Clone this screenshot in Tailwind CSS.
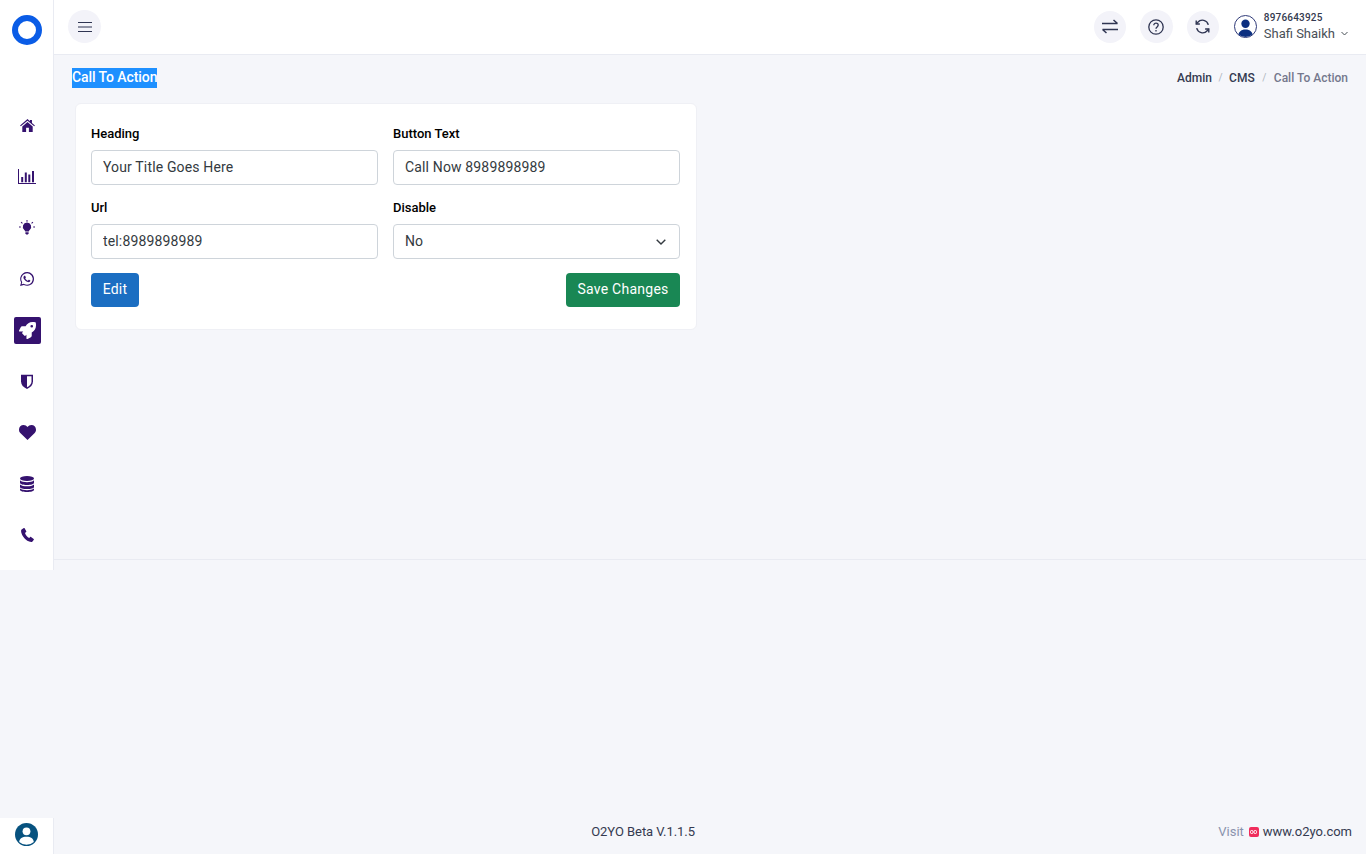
<!DOCTYPE html>
<html lang="en">
<head>
<meta charset="utf-8">
<title>Call To Action</title>
<script src="https://cdn.jsdelivr.net/npm/@tailwindcss/browser@4"></script>
</head>
<body class="bg-[#f5f6fa] font-['Roboto',sans-serif] overflow-hidden">
<div class="flex h-[854px] w-[1366px]">
  <aside class="w-[54px] shrink-0 flex flex-col">
    <div class="h-[570px] bg-white border-r border-[#e9ebf2] flex flex-col items-center">
      <div class="h-[59px] w-full flex items-center justify-center">
        <div class="w-[30px] h-[30px] rounded-full border-[6px] border-[#0a5ce6] bg-white"></div>
      </div>
      <nav class="mt-[52.5px] ml-[1px] flex flex-col items-center gap-[24.25px] text-[#35126f]">
        <a class="w-[27px] h-[27px] flex items-center justify-center">
          <svg class="w-[15px] h-[13px]" viewBox="0 0 16 14" fill="currentColor"><path d="M8 0 L10.6 2.3V1h2.2v3.2L16 7l-.8.9L8 1.8.8 7.9 0 7z"/><path d="M8 3.2l5.6 4.8V14H9.5V9.5h-3V14H2.4V8z"/></svg>
        </a>
        <a class="w-[27px] h-[27px] flex items-center justify-center">
          <svg class="w-[18px] h-[15px]" viewBox="0 0 18 15" fill="currentColor"><path d="M0 0h1v14h17v1H0z"/><path d="M3.2 8h2v5.2h-2zM6.8 3.5h2v9.7h-2zM10.3 5.5h2v7.7h-2zM14 2h2v11.2h-2z"/></svg>
        </a>
        <a class="w-[27px] h-[27px] flex items-center justify-center">
          <svg class="w-[16px] h-[16px]" viewBox="0 0 16 16" fill="currentColor"><path d="M8 2.600a4.200 4.200 0 0 0-2.700 7.400c.6.500.9 1 .9 1.600h3.600c0-.6.3-1.100.9-1.600A4.200 4.200 0 0 0 8 2.600z"/><path d="M6.400 12.300h3.200v1.300l-.8 1H7.200l-.8-1z"/><path d="M7.500 0h1v1.800h-1zM0 6.500h1.800v1H0zM14.200 6.500H16v1h-1.800zM2.400 1.800l1.400 1.300-.7.7L1.700 2.500zM13.600 1.800l.7.7-1.400 1.300-.7-.7z"/></svg>
        </a>
        <a class="w-[27px] h-[27px] flex items-center justify-center">
          <svg class="w-[14px] h-[14px]" viewBox="0 0 24 24" fill="currentColor"><path d="M20.5 3.5A11.8 11.8 0 0 0 1.9 17.7L.2 24l6.4-1.7A11.8 11.8 0 0 0 24 12c0-3.2-1.200-6.200-3.500-8.500zM12 21.800c-1.800 0-3.500-.5-5-1.400l-.4-.2-3.800 1 1-3.700-.2-.4A9.800 9.800 0 1 1 12 21.800z"/><path d="M17.400 14.400c-.3-.1-1.800-.9-2-1-.3-.1-.5-.1-.7.2l-.9 1.100c-.2.200-.3.200-.6.100-1.800-.9-3-1.600-4.100-3.600-.3-.5.300-.5.800-1.500.1-.2 0-.4 0-.5l-.9-2.200c-.2-.6-.5-.5-.7-.5h-.6c-.2 0-.5.100-.8.400-.3.300-1 1-1 2.400s1 2.800 1.200 3c.1.200 2 3.100 4.900 4.300 1.800.8 2.500.9 3.400.7.600-.1 1.800-.7 2-1.400.2-.7.2-1.300.2-1.400-.1-.1-.3-.2-.6-.3z"/></svg>
        </a>
        <a class="w-[27px] h-[27px] flex items-center justify-center bg-[#35126f] rounded-[2px] text-white">
          <svg class="w-[17px] h-[17px]" viewBox="0 0 512 512" fill="currentColor"><path d="M505.12 19.09c-1.189-5.532-6.666-11-12.207-12.188C460.71 0 435.48 0 410.36 0c-103.3 0-165.25 55.25-211.49 128H94.87A48 48 0 0 0 52 154.49l-49.42 98.8A24 24 0 0 0 24.07 288h103.77l-22.47 22.47a32 32 0 0 0 0 45.25l50.9 50.91a32 32 0 0 0 45.26 0L224 384.16V488a24 24 0 0 0 34.7 21.49l98.7-49.39a47.91 47.91 0 0 0 26.5-42.9V312.79c72.59-46.3 128-108.4 128-211.09.1-25.2.1-50.4-6.78-82.61zM384 168a40 40 0 1 1 40-40 40 40 0 0 1-40 40z"/></svg>
        </a>
        <a class="w-[27px] h-[27px] flex items-center justify-center">
          <svg class="w-[12px] h-[15px]" viewBox="0 0 12 15"><path d="M0 .8h12V7.500c0 3.300-2.400 5.900-6 7.500-3.600-1.600-6-4.200-6-7.500z" fill="currentColor"/><path d="M6 2.300h4.500V7.500c0 2.400-1.800 4.400-4.500 5.800z" fill="#fff"/></svg>
        </a>
        <a class="w-[27px] h-[27px] flex items-center justify-center">
          <svg class="w-[17px] h-[15px]" viewBox="0 0 17 15" fill="currentColor"><path d="M8.500 15 1.300 8A4.400 4.400 0 0 1 0 4.800C0 2 2 0 4.600 0c1.500 0 3 .8 3.900 2.100C9.400.8 10.900 0 12.400 0 15 0 17 2 17 4.800c0 1.200-.5 2.300-1.300 3.200z"/></svg>
        </a>
        <a class="w-[27px] h-[27px] flex items-center justify-center">
          <svg class="w-[14px] h-[16px]" viewBox="0 0 14 16" fill="currentColor"><ellipse cx="7" cy="2.500" rx="7" ry="2.500"/><path d="M0 4.300C1.300 5.700 4.200 6.200 7 6.200s5.700-.5 7-1.900V6.800C14 8.200 10.900 9 7 9S0 8.200 0 6.800z"/><path d="M0 8.600C1.300 10 4.200 10.300 7 10.300s5.700-.3 7-1.700v2.400c0 1.400-3.100 2.100-7 2.100s-7-.7-7-2.100z" /><path d="M0 12.600c1.300 1.300 4.200 1.700 7 1.700s5.700-.4 7-1.700V13.800C14 15.200 10.900 16 7 16s-7-.8-7-2.200z"/></svg>
        </a>
        <a class="w-[27px] h-[27px] flex items-center justify-center">
          <svg class="w-[13px] h-[14px]" viewBox="0 0 13 14" fill="currentColor"><path d="M2.800 0 .6 1.400C-.2 2 0 3.800.6 5.500c1.300 3.700 4.700 7.400 8.400 8.300 1.100.3 2 .1 2.500-.4l1.300-1.700c.2-.3.2-.6-.1-.8L10 8.900c-.3-.2-.6-.2-.8.100l-1 1.100C6.500 9.500 4.500 7 4 5l1.100-.9c.3-.2.300-.5.200-.8L3.600.3C3.400 0 3.100-.1 2.800 0z"/></svg>
        </a>
      </nav>
    </div>
    <div class="flex-1"></div>
    <div class="h-[36px] bg-white border-r border-[#e9ebf2] flex items-center justify-center pb-[4px]">
      <svg class="w-[23px] h-[23px]" viewBox="0 0 23 23"><circle cx="11.500" cy="11.500" r="11.500" fill="#07527f"/><circle cx="11.500" cy="8.300" r="3.900" fill="#fff"/><path d="M4.200 19c.3-3.500 3-5.300 7.300-5.300s7 1.800 7.300 5.300a11 11 0 0 1-14.600 0z" fill="#fff"/></svg>
    </div>
  </aside>

  <div class="flex-1 min-w-0 flex flex-col">
    <header class="h-[55px] bg-white border-b border-[#e9ebf2] flex items-center pl-[14px] pr-[18px] pb-[1px]">
      <button class="w-[33px] h-[33px] rounded-full bg-[#f3f3f9] flex items-center justify-center">
        <svg class="w-[14px] h-[12px]" viewBox="0 0 14 12" fill="none" stroke="#2f3552" stroke-width="1.200"><path d="M0 1.500h14M0 6h14M0 10.500h14"/></svg>
      </button>
      <div class="ml-auto flex items-center">
        <button class="w-[32px] h-[32px] rounded-full bg-[#f3f3f9] flex items-center justify-center">
          <svg class="w-[16px] h-[15px]" viewBox="0 0 16 15" fill="none" stroke="#2f3552" stroke-width="1.500"><path d="M0 4.500h15.500M11.500 1l4 3.500M16 10.500H.5M4.500 14l-4-3.500"/></svg>
        </button>
        <button class="ml-[14px] w-[33px] h-[33px] rounded-full bg-[#f3f3f9] flex items-center justify-center">
          <svg class="w-[16px] h-[16px]" viewBox="0 0 16 16" fill="none" stroke="#2f3552" stroke-width="1.300"><circle cx="8" cy="8" r="7.200"/><path d="M5.800 6.200C5.800 4.900 6.800 4.100 8 4.100c1.300 0 2.200.8 2.200 2 0 1.800-2.200 1.800-2.200 3.600"/><path d="M8 11.100v1.300"/></svg>
        </button>
        <button class="ml-[14px] w-[32px] h-[32px] rounded-full bg-[#f3f3f9] flex items-center justify-center">
          <svg class="w-[15px] h-[15px]" viewBox="0 0 16 16" fill="none" stroke="#2f3552" stroke-width="1.500"><path d="M14.200 6.200A6.500 6.500 0 0 0 3 3.500L1.300 5.300M1.800 9.800A6.500 6.500 0 0 0 13 12.500l1.700-1.800"/><path d="M1.300 1.500v3.900h3.900M14.700 14.500v-3.900h-3.900"/></svg>
        </button>
        <div class="ml-[15px] w-[23px] h-[23px] rounded-full border border-[#2f3a78] bg-white overflow-hidden flex items-center justify-center">
          <svg class="w-[21px] h-[21px]" viewBox="0 0 21 21"><circle cx="10.500" cy="7.800" r="4.200" fill="#0b2f80"/><path d="M3 21c0-5 3-7.500 7.500-7.500S18 16 18 21z" fill="#0b2f80"/></svg>
        </div>
        <div class="ml-[7px] flex flex-col">
          <span class="text-[10px] leading-[12px] font-medium tracking-[0.2px] text-[#343a50]">8976643925</span>
          <span class="mt-[2px] text-[13px] leading-[16px] font-normal text-[#495057] flex items-center">Shafi Shaikh
            <svg class="ml-[6px] w-[7px] h-[5px]" viewBox="0 0 7 5" fill="none" stroke="#495057" stroke-width="1"><path d="M.5 1l3 3 3-3"/></svg>
          </span>
        </div>
      </div>
    </header>

    <main class="h-[505px] border-b border-[#e9ebf2] pl-[18px] pr-[18px]">
      <div class="h-[48px] flex items-center justify-between pb-[3px]">
        <h1 class="text-[14px] leading-[19px] pb-[1px] font-medium tracking-[-0.08px] text-white bg-[#1e90ff]">Call To Action</h1>
        <ol class="flex items-center text-[12px] font-medium">
          <li class="text-[#343a50]">Admin</li>
          <li class="mx-[6.5px] text-[10px] font-normal text-[#adb5bd]">/</li>
          <li class="text-[#343a50]">CMS</li>
          <li class="mx-[7.5px] text-[10px] font-normal text-[#adb5bd]">/</li>
          <li class="text-[#74788d]">Call To Action</li>
        </ol>
      </div>
      <section class="ml-[3px] w-[622px] h-[227px] bg-white rounded-[6px] border border-[#eff0f5] pt-[15px] pl-[15px] pr-[16px]">
        <div class="grid grid-cols-2 gap-x-[15px]">
          <div>
            <label class="block text-[13px] leading-[16px] font-medium text-black mt-[7px]">Heading</label>
            <input value="Your Title Goes Here" class="mt-[8px] block w-full h-[35px] px-[11px] pb-[2px] text-[14px] text-[#343a40] tracking-[0.15px] bg-white border border-[#ced4da] rounded-[4px]">
          </div>
          <div>
            <label class="block text-[13px] leading-[16px] font-medium text-black mt-[7px]">Button Text</label>
            <input value="Call Now 8989898989" class="mt-[8px] block w-full h-[35px] px-[11px] pb-[2px] text-[14px] text-[#343a40] tracking-[0.15px] bg-white border border-[#ced4da] rounded-[4px]">
          </div>
          <div>
            <label class="block text-[13px] leading-[16px] font-medium text-black mt-[15px]">Url</label>
            <input value="tel:8989898989" class="mt-[8px] block w-full h-[35px] px-[11px] pb-[1px] text-[14px] text-[#343a40] tracking-[0.15px] bg-white border border-[#ced4da] rounded-[4px]">
          </div>
          <div>
            <label class="block text-[13px] leading-[16px] font-medium text-black mt-[15px]">Disable</label>
            <div class="mt-[8px] h-[35px] px-[11px] text-[14px] text-[#343a40] bg-white border border-[#ced4da] rounded-[4px] flex items-center justify-between">
              <span>No</span>
              <svg class="w-[10px] h-[6px] mr-[2px]" viewBox="0 0 10 6" fill="none" stroke="#343a40" stroke-width="1.400"><path d="M.7.7 5 5l4.300-4.300"/></svg>
            </div>
          </div>
        </div>
        <div class="mt-[14px] flex justify-between">
          <button class="h-[34px] w-[48px] pb-[1px] rounded-[4px] bg-[#1b6ec2] text-white text-[14px] font-normal tracking-[0.2px]">Edit</button>
          <button class="h-[34px] w-[114px] pb-[1px] rounded-[4px] bg-[#198754] text-white text-[14px] font-normal tracking-[0.25px]">Save Changes</button>
        </div>
      </section>
    </main>

    <div class="flex-1"></div>
    <footer class="h-[36px] flex items-center pr-[14px] pb-[9px] text-[13px]">
      <div class="flex-1 text-center text-[#343a50] pl-[14px] tracking-[-0.05px]">O2YO Beta V.1.1.5</div>
      <div class="flex items-center">
        <span class="text-[#8a93ad]">Visit</span>
        <span class="ml-[5px] w-[10px] h-[10px] rounded-[2px] bg-[#f02d5c] flex items-center justify-center">
          <svg class="w-[7px] h-[4px]" viewBox="0 0 7 4" fill="none" stroke="#fff" stroke-width="1"><rect x=".5" y=".5" width="2.500" height="3" rx="1"/><rect x="4" y=".5" width="2.500" height="3" rx="1"/></svg>
        </span>
        <span class="ml-[4px] text-[#343a50]">www.o2yo.com</span>
      </div>
    </footer>
  </div>
</div>
</body>
</html>
